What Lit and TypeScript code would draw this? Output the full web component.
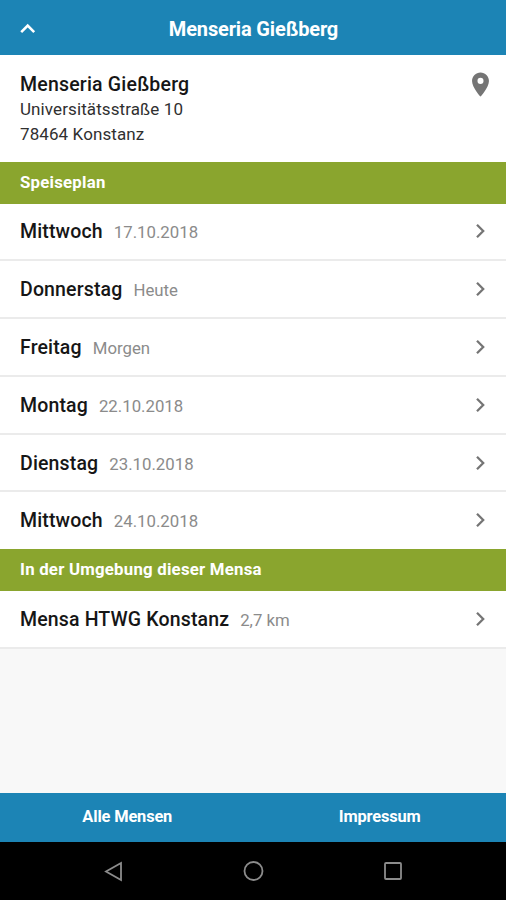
import { LitElement, html, css } from "lit";
import { customElement } from "lit/decorators.js";

const days = [
  ["Mittwoch", "17.10.2018"],
  ["Donnerstag", "Heute"],
  ["Freitag", "Morgen"],
  ["Montag", "22.10.2018"],
  ["Dienstag", "23.10.2018"],
  ["Mittwoch", "24.10.2018"],
];

@customElement("app-root")
class AppRoot extends LitElement {
  static styles = css`
    :host { display: flex; flex-direction: column; height: 900px; background: #f8f8f8; font-family: Roboto, sans-serif; color: #161616; overflow: hidden; }
    * { box-sizing: border-box; }
    .header, .address, .section, .row, .tabs, .nav { flex-shrink: 0; }
    .header { height: 55px; background: #1c84b5; display: grid; grid-template-columns: 55px 1fr 55px; align-items: center; color: #fff; }
    .header svg { margin-left: 16px; display: block; }
    .title { font-size: 20px; font-weight: 700; text-align: center; white-space: nowrap; letter-spacing: -0.15px; padding: 2px 0 0 1px; }
    .address { height: 107px; background: #fff; padding: 17px 16px 0 20px; display: flex; justify-content: space-between; }
    .place { font-size: 19.5px; font-weight: 500; line-height: 25px; letter-spacing: .2px; }
    .line { font-size: 17px; line-height: 25px; letter-spacing: .1px; color: #303030; }
    .address svg { margin: -2px -5px 0 0; }
    .section { height: 41.5px; background: #8aa52e; color: #fff; font-size: 16.8px; font-weight: 700; line-height: 40px; padding-left: 20px; letter-spacing: .23px; }
    .section.near { height: 42px; }
    .row { height: 57.8px; background: #fff; border-bottom: 2px solid #ebebeb; display: flex; align-items: center; padding: 0 15px 0 20px; }
    .row.last { height: 56.5px; padding-top: 1px; border-bottom-color: #fff; }
    .name { font-size: 19.5px; font-weight: 500; letter-spacing: .15px; padding-top: 1px; }
    .note { font-size: 16.8px; color: #8b8b8b; margin-left: 11px; flex: 1; padding-top: 2px; }
    .tabs { margin-top: auto; height: 49px; background: #1c84b5; color: #fff; display: grid; grid-template-columns: 1fr 1fr; text-align: center; font-size: 16.4px; font-weight: 700; line-height: 47px; padding-left: 1px; }
    .tabs span { letter-spacing: -.15px; }
    .nav { height: 58px; background: #000; display: flex; justify-content: space-between; align-items: center; padding: 0 101px; }
  `;
  row(name: string, note: string, last = false) {
    return html`<div class="row ${last ? "last" : ""}"><span class="name">${name}</span><span class="note">${note}</span>
      <svg width="20" height="20" viewBox="0 0 20 20"><path d="M6 3.8l6.2 6.2L6 16.2" fill="none" stroke="#757575" stroke-width="2.3"/></svg></div>`;
  }
  render() {
    return html`
      <div class="header">
        <svg width="24" height="24" viewBox="0 0 24 24"><path d="M5.2 16.2l6.5-6.5 6.5 6.5" fill="none" stroke="#fff" stroke-width="2.6"/></svg>
        <div class="title">Menseria Gießberg</div>
      </div>
      <div class="address">
        <div><div class="place">Menseria Gießberg</div><div class="line">Universitätsstraße 10</div><div class="line">78464 Konstanz</div></div>
        <svg width="29" height="29" viewBox="0 0 24 24"><path fill="#757575" d="M12 2C8.13 2 5 5.13 5 9c0 5.25 7 13 7 13s7-7.75 7-13c0-3.87-3.13-7-7-7zm0 9.500a2.5 2.5 0 1 1 0-5 2.5 2.5 0 0 1 0 5z"/></svg>
      </div>
      <div class="section">Speiseplan</div>
      ${days.map(([n, d], i) => this.row(n, d, i === days.length - 1))}
      <div class="section near">In der Umgebung dieser Mensa</div>
      ${this.row("Mensa HTWG Konstanz", "2,7 km")}
      <div class="tabs"><span>Alle Mensen</span><span>Impressum</span></div>
      <div class="nav">
        <svg width="24" height="24" viewBox="0 0 24 24"><path d="M20 4v17L5 12.5z" fill="none" stroke="#8c8c8c" stroke-width="1.8"/></svg>
        <svg width="24" height="24" viewBox="0 0 24 24"><circle cx="12.5" cy="12" r="9" fill="none" stroke="#8c8c8c" stroke-width="1.8"/></svg>
        <svg width="24" height="24" viewBox="0 0 24 24"><rect x="4" y="4" width="16" height="16" rx="1" fill="none" stroke="#8c8c8c" stroke-width="1.8"/></svg>
      </div>`;
  }
}
